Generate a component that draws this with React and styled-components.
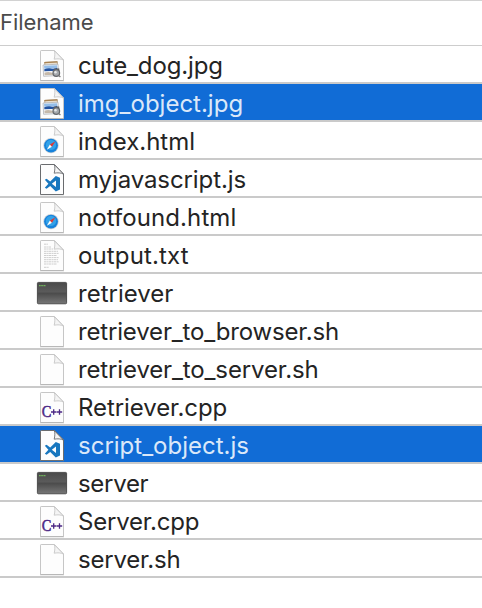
import React from "react";
import styled, { createGlobalStyle } from "styled-components";

const GlobalStyle = createGlobalStyle`
  body { margin: 0; background: #fff; }
`;

const Panel = styled.main`
  width: 482px;
  height: 608px;
  overflow: hidden;
  background: #fff;
  font-family: Inter, "Liberation Sans", sans-serif;
`;

const Header = styled.header`
  box-sizing: border-box;
  height: 46px;
  border-top: 1px solid #d2d2d2;
  border-bottom: 1px solid #cdcdcd;
  color: #4b4b4b;
  font-size: 22px;
  line-height: 42px;
  letter-spacing: ${(p) => p.$tracking}px;
`;

const List = styled.ul`
  list-style: none;
  margin: 0;
  padding: 0;
`;

const Row = styled.li`
  box-sizing: border-box;
  height: 38px;
  display: flex;
  align-items: center;
  padding-left: 36px;
  border-bottom: 2px solid #cacaca;
  background: ${(p) => (p.$selected ? "#116cd6" : "#fff")};
  color: ${(p) => (p.$selected ? "#dbe8f9" : "#242424")};
`;

const IconSlot = styled.span`
  width: 42px;
  height: 36px;
  flex: none;

  svg { display: block; }
`;

const Name = styled.span`
  font-size: 24px;
  line-height: 36px;
  padding-top: 3px;
  white-space: nowrap;
  letter-spacing: ${(p) => p.$tracking}px;
`;

function Page({ edge = "#c6c6c6", children }) {
  return (
    <svg width="32" height="36" viewBox="0 0 32 36">
      <path d="M4.5 5.2Q4.5 4.5 5.2 4.5H18.5L27.5 14V34.5H4.5Z" fill="#fdfdfd" stroke={edge} strokeWidth="1" strokeLinejoin="round" />
      <path d="M4 34.9H28" stroke="#888" strokeOpacity=".45" strokeWidth=".8" />
      {children}
      <path d="M18.3 4.7C19.3 7.5 18.8 10 18.2 13.2C21.5 12.5 25 12.8 27.4 14Z" fill="#f4f4f4" stroke={edge} strokeWidth=".9" strokeLinejoin="round" />
    </svg>
  );
}

function ImageIcon() {
  return (
    <Page>
      <g transform="rotate(-3 15 22)">
        <rect x="9" y="16" width="12.6" height="6" fill="#e9dfcf" stroke="#a58a69" strokeWidth=".7" />
        <path d="M8.7 16.2H21.7" stroke="#a98352" strokeWidth="1.2" />
        <rect x="7.2" y="18.6" width="15" height="11.3" fill="#f7f8fa" stroke="#a7abb1" strokeWidth=".7" />
        <rect x="8.2" y="19.5" width="13" height="3" fill="#93bde9" />
        <path d="M8.2 23Q12 21.6 15 22.5T21.2 22V25H8.2Z" fill="#2353a1" />
        <path d="M8.2 26.4Q13 25 18 27.8V29H8.2Z" fill="#c5b9aa" />
      </g>
      <path d="M18.3 22.5H23.3V25.5H18.3Z" fill="#555" />
      <circle cx="20.3" cy="27" r="3.3" fill="#a5a9ad" stroke="#64676b" strokeWidth="1.2" />
      <circle cx="19.5" cy="26.2" r="1.2" fill="#e8eaeb" />
      <path d="M22.4 29.2L24.4 31" stroke="#777" strokeWidth="1.2" />
    </Page>
  );
}

function SafariIcon() {
  return (
    <Page>
      <circle cx="15" cy="23.6" r="7.7" fill="#c9d0d6" />
      <circle cx="15" cy="23.6" r="6.9" fill="#1682db" />
      <circle cx="15" cy="22.9" r="5.2" fill="#32a2e9" />
      <path d="M10.8 27.8L13.9 22.6L16 24.7Z" fill="#fff" />
      <path d="M19.4 19.2L16 24.7L13.9 22.6Z" fill="#df3934" />
    </Page>
  );
}

function CodeIcon() {
  return (
    <Page edge="#696b6e">
      <path d="M19.8 16L24 17.8V29.5L19.8 31.4L14.2 26L10.6 28.7L8.8 27.8L12.4 23.7L8.8 19.7L10.6 18.8L14.2 21.5ZM20 20.4L15.8 23.7L20 27Z" fill="#1877bf" fillRule="evenodd" />
    </Page>
  );
}

function TextIcon() {
  return (
    <Page>
      <path d="M8 8.2H12M8 11H15M8 13H17M8 15.3H22M8 17.4H23M8 19.5H21M8 21.6H23M8 23.7H22M8 25.8H23M8 28H21M8 31.3H13" stroke="#c2c2c2" strokeWidth=".8" strokeDasharray="2.6 .5 1.4 .4" />
    </Page>
  );
}

const Letter = styled.text`
  font: 16px "Liberation Serif", serif;
  fill: #4b2885;
  stroke: #4b2885;
  stroke-width: 0.5px;
`;

function CppIcon() {
  return (
    <Page>
      <Letter x="5.8" y="29.4" textLength="9.6" lengthAdjust="spacingAndGlyphs">C</Letter>
      <path d="M15 24H20.4M17.7 21.3V26.7M20.8 24H26.2M23.5 21.3V26.7" stroke="#4b2885" strokeWidth="1.3" />
    </Page>
  );
}

function TerminalIcon() {
  return (
    <svg width="32" height="36" viewBox="0 0 32 36">
      <defs>
        <linearGradient id="terminal" x2="0" y2="1">
          <stop offset="0" stopColor="#4a4a4a" />
          <stop offset=".45" stopColor="#5b5b5b" />
          <stop offset=".5" stopColor="#4b4b4b" />
          <stop offset="1" stopColor="#777" />
        </linearGradient>
      </defs>
      <rect x="1.4" y="8.4" width="29.2" height="21.4" rx="1" fill="url(#terminal)" stroke="#373737" strokeWidth=".8" />
      <path d="M3 11.7H10" stroke="#71b45c" strokeWidth="1.3" strokeDasharray="1.7 .5" />
    </svg>
  );
}

const icons = {
  image: ImageIcon,
  safari: SafariIcon,
  code: CodeIcon,
  text: TextIcon,
  terminal: TerminalIcon,
  blank: Page,
  cpp: CppIcon,
};

const files = [
  { name: "cute_dog.jpg", icon: "image", tracking: -0.12 },
  { name: "img_object.jpg", icon: "image", tracking: 0, selected: true },
  { name: "index.html", icon: "safari", tracking: 0 },
  { name: "myjavascript.js", icon: "code", tracking: -0.1 },
  { name: "notfound.html", icon: "safari", tracking: 0.08 },
  { name: "output.txt", icon: "text", tracking: 0.14 },
  { name: "retriever", icon: "terminal", tracking: 0 },
  { name: "retriever_to_browser.sh", icon: "blank", tracking: -0.17 },
  { name: "retriever_to_server.sh", icon: "blank", tracking: -0.14 },
  { name: "Retriever.cpp", icon: "cpp", tracking: -0.08 },
  { name: "script_object.js", icon: "code", tracking: 0, selected: true },
  { name: "server", icon: "terminal", tracking: -0.3 },
  { name: "Server.cpp", icon: "cpp", tracking: -0.22 },
  { name: "server.sh", icon: "blank", tracking: -0.22 },
];

export default function App() {
  return (
    <Panel>
      <GlobalStyle />
      <Header $tracking={-0.05}>Filename</Header>
      <List>
        {files.map(({ name, icon, tracking, selected }) => {
          const Icon = icons[icon];
          return (
            <Row key={name} $selected={selected}>
              <IconSlot><Icon /></IconSlot>
              <Name $tracking={tracking}>{name}</Name>
            </Row>
          );
        })}
      </List>
    </Panel>
  );
}
